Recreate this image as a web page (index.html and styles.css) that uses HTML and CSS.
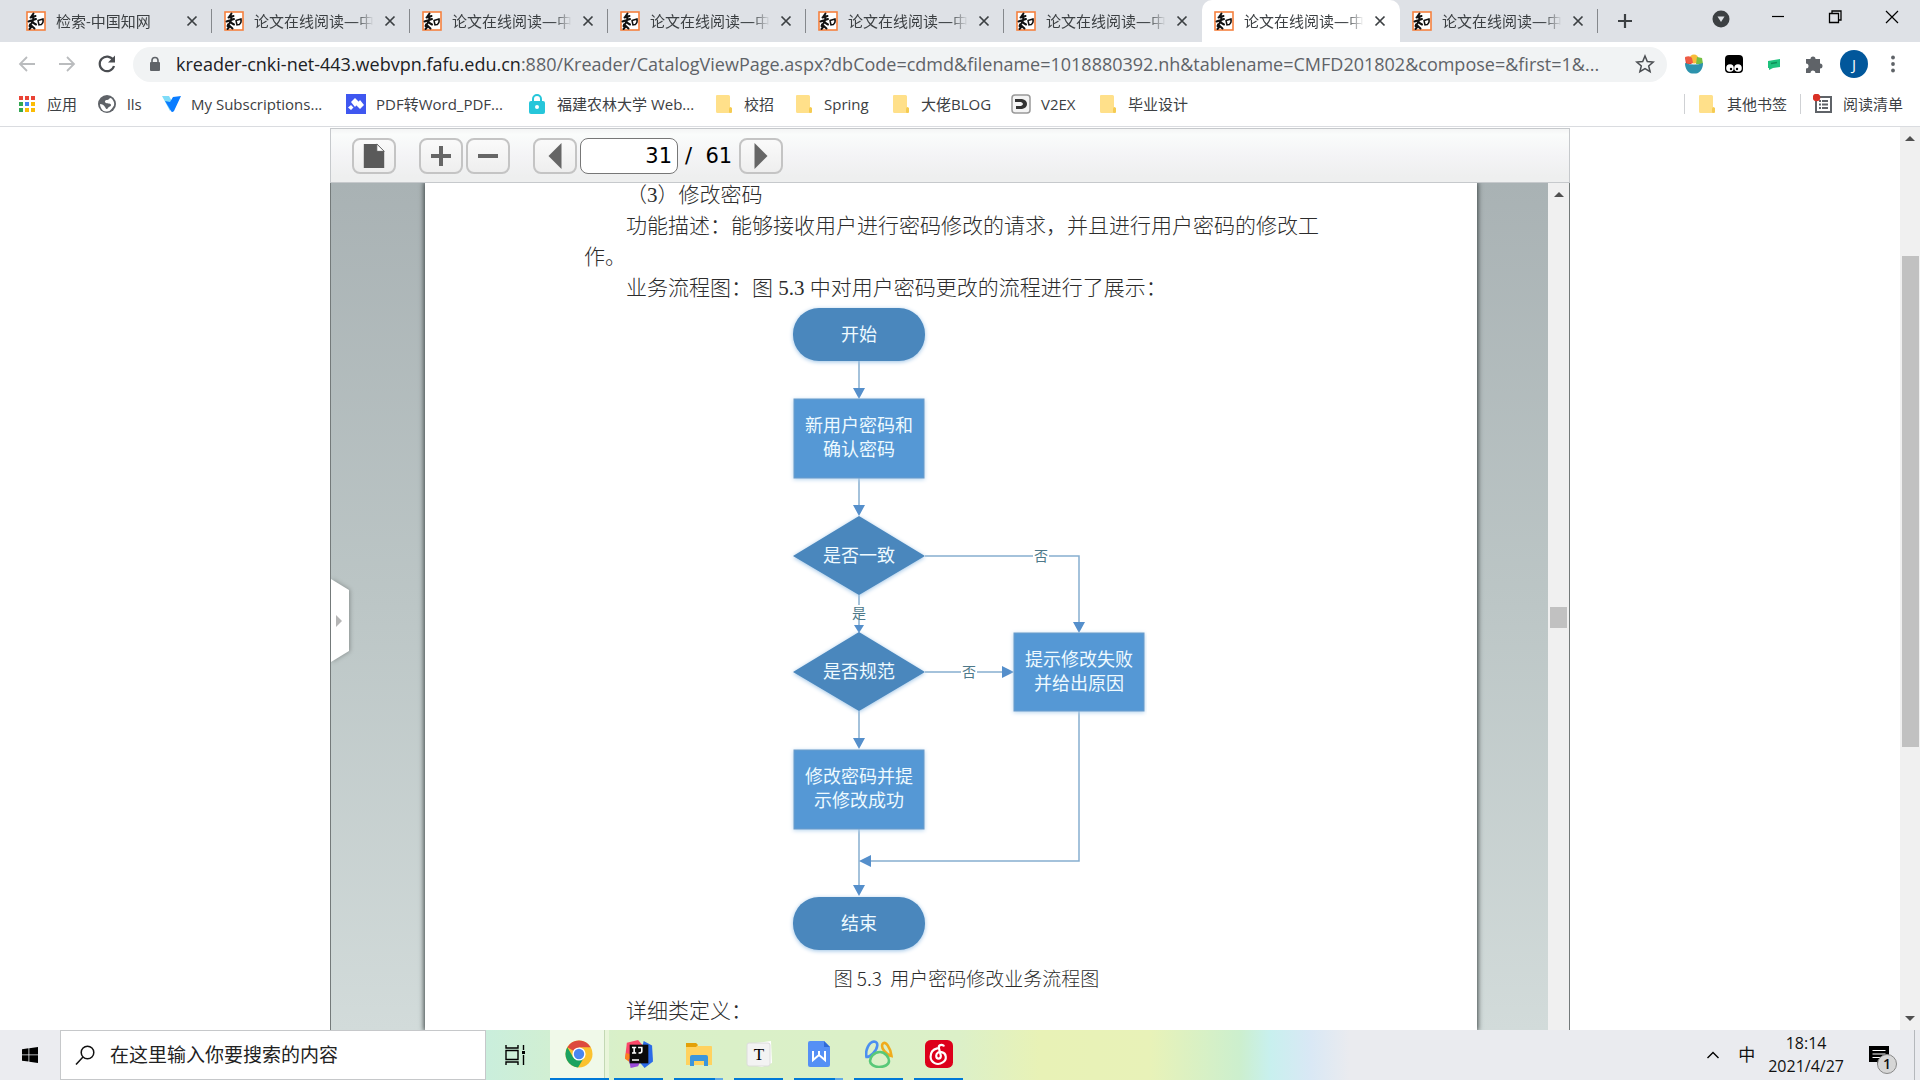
FILE: index.html
```
<!DOCTYPE html>
<html lang="zh-CN">
<head>
<meta charset="utf-8">
<title>论文在线阅读—中国知网</title>
<link rel="stylesheet" href="styles.css">
</head>
<body>
<svg class="defs" aria-hidden="true">
  <symbol id="zhi" viewBox="0 0 20 20">
    <rect x="1" y="1" width="18" height="18" fill="#fff" stroke="#f5813f" stroke-width="1.6"/>
    <path d="M7.500 2.500L5 6M4.500 6.500l5-1.500M2.500 10.500l7.500-2.500M7.500 5.500c0 4-1.500 7-4 9.500M6.500 11c1 1 2.500 2 3.500 2.500M4 13.500l4.500 4M6 15l-2.500 3" fill="none" stroke="#111" stroke-width="2" stroke-linecap="round"/>
    <path d="M12 9.500l1 4.500M12 9.500l5-1.500c.4 2-.3 4.500-1.600 5.500l-2.200.3" fill="none" stroke="#111" stroke-width="1.500" stroke-linecap="round"/>
  </symbol>
  <symbol id="close" viewBox="0 0 12 12"><path d="M1.500 1.500l9 9M10.500 1.500l-9 9" stroke="#3c4043" stroke-width="1.700" fill="none"/></symbol>
  <symbol id="folder" viewBox="0 0 20 20"><path d="M3 1h11.500a1.500 1.500 0 0 1 1.500 1.500V13l2 1v3.500a1.500 1.500 0 0 1-1.500 1.500H3.500A1.500 1.500 0 0 1 2 17.500V2a1 1 0 0 1 1-1z" fill="#ffe08a"/><path d="M15 18.500v-4l1-1.500 2 1v3.500a1.500 1.500 0 0 1-1.500 1.500z" fill="#f5cb52"/></symbol>
</svg>

<header class="browser">
  <div class="tabstrip">
    <div class="tab"><svg class="fav"><use href="#zhi"/></svg><span class="tab-title">检索-中国知网</span><button class="tab-close" aria-label="关闭"><svg><use href="#close"/></svg></button></div>
    <div class="tab"><svg class="fav"><use href="#zhi"/></svg><span class="tab-title">论文在线阅读—中</span><button class="tab-close" aria-label="关闭"><svg><use href="#close"/></svg></button></div>
    <div class="tab"><svg class="fav"><use href="#zhi"/></svg><span class="tab-title">论文在线阅读—中</span><button class="tab-close" aria-label="关闭"><svg><use href="#close"/></svg></button></div>
    <div class="tab"><svg class="fav"><use href="#zhi"/></svg><span class="tab-title">论文在线阅读—中</span><button class="tab-close" aria-label="关闭"><svg><use href="#close"/></svg></button></div>
    <div class="tab"><svg class="fav"><use href="#zhi"/></svg><span class="tab-title">论文在线阅读—中</span><button class="tab-close" aria-label="关闭"><svg><use href="#close"/></svg></button></div>
    <div class="tab before-active"><svg class="fav"><use href="#zhi"/></svg><span class="tab-title">论文在线阅读—中</span><button class="tab-close" aria-label="关闭"><svg><use href="#close"/></svg></button></div>
    <div class="tab active"><svg class="fav"><use href="#zhi"/></svg><span class="tab-title">论文在线阅读—中</span><button class="tab-close" aria-label="关闭"><svg><use href="#close"/></svg></button></div>
    <div class="tab"><svg class="fav"><use href="#zhi"/></svg><span class="tab-title">论文在线阅读—中</span><button class="tab-close" aria-label="关闭"><svg><use href="#close"/></svg></button></div>
    <button class="new-tab" aria-label="新标签页"><svg viewBox="0 0 16 16"><path d="M8 1v14M1 8h14" stroke="#3c4043" stroke-width="2.200"/></svg></button>
    <div class="window-controls">
      <button aria-label="搜索标签页"><svg viewBox="0 0 20 20"><circle cx="10" cy="11" r="8.500" fill="#3c4043"/><path d="M6.500 8.500h7L10 14z" fill="#dee1e6"/></svg></button>
      <button aria-label="最小化"><svg viewBox="0 0 20 20"><path d="M4 8.500h12" stroke="#000" stroke-width="1.200"/></svg></button>
      <button aria-label="还原"><svg viewBox="0 0 20 20"><path d="M4.500 5.500h9v9h-9zM7 5.500v-2.500h9v9h-2.500" fill="none" stroke="#000" stroke-width="1.300"/></svg></button>
      <button aria-label="关闭窗口"><svg viewBox="0 0 20 20"><path d="M4 3l12 12M16 3L4 15" stroke="#000" stroke-width="1.200"/></svg></button>
    </div>
  </div>

  <div class="navbar">
    <button aria-label="后退"><svg viewBox="0 0 20 20"><path d="M18 10H3M10 3l-7 7 7 7" fill="none" stroke="#babcbe" stroke-width="1.800"/></svg></button>
    <button aria-label="前进"><svg viewBox="0 0 20 20"><path d="M2 10h15M10 3l7 7-7 7" fill="none" stroke="#babcbe" stroke-width="1.800"/></svg></button>
    <button aria-label="重新加载"><svg viewBox="0 0 20 20"><path d="M16.200 6A7.300 7.300 0 1 0 17 12" fill="none" stroke="#4a4d51" stroke-width="2.200"/><path d="M18 1.500v7h-7z" fill="#4a4d51"/></svg></button>
    <div class="omnibox">
      <svg class="lock" viewBox="0 0 12 16"><path d="M3 7V4.500a3 3 0 0 1 6 0V7" fill="none" stroke="#5f6368" stroke-width="1.600"/><rect x="1" y="6" width="10" height="9" rx="1" fill="#5f6368"/></svg>
      <span class="url"><b>kreader-cnki-net-443.webvpn.fafu.edu.cn</b>:880/Kreader/CatalogViewPage.aspx?dbCode=cdmd&amp;filename=1018880392.nh&amp;tablename=CMFD201802&amp;compose=&amp;first=1&amp;...</span>
      <button aria-label="收藏"><svg viewBox="0 0 20 20"><path d="M10 2l2.300 5.500 5.900.5-4.500 3.900 1.400 5.800L10 14.600l-5.100 3.100 1.400-5.800L1.800 8l5.900-.5z" fill="none" stroke="#4a4d51" stroke-width="1.500"/></svg></button>
    </div>
    <div class="extensions">
      <button aria-label="扩展一"><svg viewBox="0 0 20 20"><path d="M1 3l7 7H2z" fill="#d8342c"/><circle cx="10" cy="5" r="4.500" fill="#f8bd3a"/><path d="M13 3l5 1 1 6h-7z" fill="#76c043"/><path d="M1 3q5-2 7 1l1 5-6 1z" fill="#ee5b44"/><path d="M1 9q9 3 18 0c0 6-3 10-7 10.500H8C4 19 1 15 1 9z" fill="#2d93ad"/></svg></button>
      <button aria-label="扩展二"><svg viewBox="0 0 20 20"><rect x="1" y="1" width="18" height="18" rx="4" fill="#000"/><circle cx="6" cy="14" r="3.800" fill="#fff"/><circle cx="14" cy="14" r="3.800" fill="#fff"/><circle cx="7" cy="15" r="1.200"/><circle cx="13" cy="15" r="1.200"/></svg></button>
      <button aria-label="扩展三"><svg viewBox="0 0 20 20"><path d="M4 7l12-2v8l-7 1-4 2v-2H4z" fill="#1ec27d"/><path d="M7 9.500l6-1" stroke="#0c8f58" stroke-width="1.500"/></svg></button>
      <button aria-label="扩展程序"><svg viewBox="0 0 20 20"><path d="M2 5h4.500a2.500 2.500 0 1 1 5 0H16v4.500a2.500 2.500 0 1 1 0 5V19h-4.500a2.500 2.500 0 0 0-5 0H2v-4.500a2.500 2.500 0 0 0 0-5z" fill="#5f6368"/></svg></button>
      <button class="avatar" aria-label="用户">J</button>
      <button aria-label="菜单"><svg viewBox="0 0 20 20" fill="#5f6368"><circle cx="10" cy="3.500" r="1.900"/><circle cx="10" cy="10" r="1.900"/><circle cx="10" cy="16.500" r="1.900"/></svg></button>
    </div>
  </div>

  <nav class="bookmarks">
    <a href="#"><svg viewBox="0 0 20 20"><path d="M2 2h4v4H2zM8 2h4v4H8zM14 2h4v4h-4z" fill="#ea4335"/><path d="M2 8h4v4H2zM2 14h4v4H2zM8 14h4v4H8z" fill="#34a853"/><path d="M8 8h4v4H8z" fill="#4285f4"/><path d="M14 8h4v4h-4zM14 14h4v4h-4zM8 14h4v4H8z" fill="#fbbc05"/></svg>应用</a>
    <a href="#"><svg viewBox="0 0 20 20"><circle cx="10" cy="10" r="9" fill="#5f6368"/><path d="M14 4c-2 0-2 2-4 2S7 8 9 9s5 0 5 2-2 1-3 3-2 1-3-1-3-3-5-3q0 2 1 4 2 4 6 3.500 3 0 5-3l2-3q1-4-3-7.500z" fill="#fff"/></svg>lls</a>
    <a href="#"><svg viewBox="0 0 20 20"><path d="M1 2h7l4 7-3 8z" fill="#7fdcf8"/><path d="M4 7l5 1 3-5 8-1-7 15q-2 2-3 0z" fill="#0a7cff"/></svg>My Subscriptions...</a>
    <a href="#"><svg viewBox="0 0 20 20"><rect width="20" height="20" fill="#3f57f0"/><path d="M9 4l4 4-4 5-4-5zM14 6l4 5-4 4-4-4zM5 11l2.500 2.500L5 16l-3-2.500z" fill="#fff"/></svg>PDF转Word_PDF...</a>
    <a href="#"><svg viewBox="0 0 20 20"><path d="M6 8V5a4 4 0 0 1 8 0v3" fill="none" stroke="#26c6da" stroke-width="2"/><rect x="2" y="7" width="16" height="13" rx="2" fill="#26c6da"/><circle cx="10" cy="13" r="2" fill="#fff"/></svg>福建农林大学 Web...</a>
    <a href="#"><svg><use href="#folder"/></svg>校招</a>
    <a href="#"><svg><use href="#folder"/></svg>Spring</a>
    <a href="#"><svg><use href="#folder"/></svg>大佬BLOG</a>
    <a href="#"><svg viewBox="0 0 20 20"><rect x="1" y="1" width="18" height="18" rx="3" fill="#f4f4f4" stroke="#999" stroke-width="1.500"/><path d="M4 5h7q5 1 5 5t-5 5H5v-3h5q2-1 2-2t-2-2H4z" fill="#333"/></svg>V2EX</a>
    <a href="#"><svg><use href="#folder"/></svg>毕业设计</a>
    <a href="#" class="side"><svg><use href="#folder"/></svg>其他书签</a>
    <a href="#" class="side"><svg viewBox="0 0 20 20"><rect x="3" y="3" width="15" height="15" fill="none" stroke="#5f6368" stroke-width="2"/><path d="M6 7h2M9 7h6M6 10.500h2M9 10.500h6M6 14h2M9 14h6" stroke="#5f6368" stroke-width="1.800"/><circle cx="3.500" cy="3.500" r="3.800" fill="#d93025"/></svg>阅读清单</a>
  </nav>
</header>

<main class="page">
  <section class="reader">
    <div class="tools">
      <button class="tool" aria-label="单页"><svg viewBox="0 0 24 28"><path d="M1 1h14l8 8v18H1z" fill="#5a5a5a"/><path d="M15 1v8h8z" fill="#fff" stroke="#5a5a5a"/></svg></button>
      <button class="tool group" aria-label="放大"><svg viewBox="0 0 24 24"><path d="M12 2v20M2 12h20" stroke="#666" stroke-width="4"/></svg></button>
      <button class="tool" aria-label="缩小"><svg viewBox="0 0 24 24"><path d="M2 12h20" stroke="#666" stroke-width="4"/></svg></button>
      <button class="tool group" aria-label="上一页"><svg viewBox="0 0 24 28"><path d="M19 0v28L5 14z" fill="#666"/></svg></button>
      <input class="page-no" aria-label="页码" value="31">
      <span class="total">/&nbsp; 61</span>
      <button class="tool" aria-label="下一页"><svg viewBox="0 0 24 28"><path d="M5 0v28l14-14z" fill="#666"/></svg></button>
    </div>
    <div class="viewer">
      <button class="drawer" aria-label="展开目录"><svg viewBox="0 0 20 84"><path d="M0 0l18 11v61L0 83z" fill="#fff"/><path d="M5 36l6 6-6 6z" fill="#b5b5b5"/></svg></button>
      <article class="paper">
        <p>（3）修改密码</p>
        <p>功能描述：能够接收用户进行密码修改的请求，并且进行用户密码的修改工作。</p>
        <p>业务流程图：图 5.3 中对用户密码更改的流程进行了展示：</p>
        <figure>
          <svg class="flow" viewBox="0 0 360 658" role="img" aria-label="用户密码修改业务流程图">
            <g class="edges">
              <path d="M72 57v30M72 174v30M72 291v33M72 407v31M72 525v63M138 252h154v66M138 368h82M292 407v150H82" class="wire"/>
              <path d="M66 84h12l-6 11zM66 201h12l-6 11zM67 321h10l-5 8zM66 434h12l-6 11zM66 581h12l-6 11zM286 318h12l-6 11zM215 362v12l12-6zM84 551v12l-12-6z" class="head"/>
            </g>
            <g class="gaps"><rect x="246" y="245" width="16" height="14"/><rect x="174" y="361" width="16" height="14"/><rect x="65" y="301" width="14" height="15"/></g>
            <g class="round"><rect x="6" y="4" width="132" height="53" rx="26"/><rect x="6" y="593" width="132" height="53" rx="26"/><path d="M72 212l66 40-66 39-66-39zM72 328l66 40-66 39-66-39z"/></g>
            <g class="box"><rect x="7" y="95" width="130" height="79"/><rect x="7" y="446" width="130" height="79"/><rect x="227" y="329" width="130" height="78"/></g>
            <g class="node">
              <text x="72" y="37">开始</text>
              <text x="72" y="128">新用户密码和</text><text x="72" y="152">确认密码</text>
              <text x="72" y="258">是否一致</text><text x="72" y="374">是否规范</text>
              <text x="292" y="362">提示修改失败</text><text x="292" y="386">并给出原因</text>
              <text x="72" y="479">修改密码并提</text><text x="72" y="503">示修改成功</text>
              <text x="72" y="626">结束</text>
            </g>
            <g class="branch"><text x="254" y="257">否</text><text x="182" y="373">否</text><text x="72" y="314">是</text></g>
          </svg>
          <figcaption>图 5.3&nbsp; 用户密码修改业务流程图</figcaption>
        </figure>
        <p>详细类定义：</p>
      </article>
      <div class="scrollbar inner"><i class="up"></i><i class="thumb"></i></div>
    </div>
  </section>
  <div class="scrollbar outer"><i class="up"></i><i class="thumb"></i><i class="down"></i></div>
</main>

<footer class="taskbar">
  <button class="start" aria-label="开始"><svg viewBox="0 0 16 16"><path d="M0 2.200L6.500 1.300v6.200H0zM7.300 1.200L16 0v7.500H7.300zM0 8.300h6.500v6.200L0 13.700zM7.300 8.300H16V16l-8.700-1.300z"/></svg></button>
  <label class="search"><svg viewBox="0 0 20 20"><circle cx="12.500" cy="7.500" r="6.300" fill="none" stroke="#111" stroke-width="1.500"/><path d="M8 12L1 19.500" stroke="#111" stroke-width="1.500"/></svg><input type="text" placeholder="在这里输入你要搜索的内容" aria-label="搜索"></label>
  <div class="apps">
    <button class="task-view" aria-label="任务视图"><svg viewBox="0 0 22 22"><path d="M2 1v3h12V1M2 21v-3h12v3M2 6.500h12v9H2zM19.500 1v5M19.500 11v10" fill="none" stroke="#000" stroke-width="1.400"/><path d="M18 7h3v3h-3z"/></svg></button>
    <button class="app current" aria-label="Chrome"><svg viewBox="0 0 28 28"><circle cx="14" cy="14" r="13.500" fill="#fbc22f"/><path d="M14 14L2.300 7.200A13.500 13.500 0 0 1 25.700 7.200H14z" fill="#dd4b3e"/><path d="M2.300 7.200A13.500 13.500 0 0 0 13 27.500l6.200-10.200L14 14 8 17z" fill="#1ba260"/><circle cx="14" cy="14" r="6.600" fill="#fff"/><circle cx="14" cy="14" r="5.200" fill="#4a86f0"/></svg></button>
    <button class="app" aria-label="IntelliJ IDEA"><svg viewBox="0 0 30 30"><path d="M2 3L14 0l6 7L8 22 0 20z" fill="#fc4769"/><path d="M1 14l7 2v10l-8-6z" fill="#fc801d"/><path d="M20 1l9 5 1 17-9 7-6-7z" fill="#2b6be8"/><path d="M4 20l12 4-2 4-8 2z" fill="#9b4bd8"/><rect x="5" y="5" width="20" height="20" fill="#0a0a0a"/><path d="M7.500 8H12M7.500 14H12M9.800 8v6M14 8h4v4q0 2-3.500 2M7.500 21.500H15" fill="none" stroke="#fff" stroke-width="1.700"/></svg></button>
    <button class="app split" aria-label="文件资源管理器"><svg viewBox="0 0 28 28"><path d="M1 3h10l2 3h13a1 1 0 0 1 1 1v18H1z" fill="#ffd25f"/><path d="M1 3h10l2 2-2 2H1z" fill="#e3a008"/><path d="M5 26V17q0-2 2-2h14q2 0 2 2v9h-4v-5H9v5z" fill="#3c96dc"/></svg></button>
    <button class="app" aria-label="Typora"><svg viewBox="0 0 28 28"><path d="M2 4l24-3 1 22-10 4-15-3z" fill="#fff"/><rect x="2" y="3" width="23" height="23" rx="2" fill="#f3f3f3" stroke="#dcdcdc"/><text x="14" y="20" class="typora">T</text></svg></button>
    <button class="app split" aria-label="WPS"><svg viewBox="0 0 28 28"><path d="M5 1h14l6 6v18a2 2 0 0 1-2 2H5a2 2 0 0 1-2-2V3a2 2 0 0 1 2-2z" fill="#5590f5"/><path d="M19 1v6h6z" fill="#2f6ad8"/><path d="M8 11v9l6-5 6 5v-9M14 15v-4" fill="none" stroke="#fff" stroke-width="2"/></svg></button>
    <button class="app" aria-label="Navicat"><svg viewBox="0 0 28 28"><g fill="none" stroke-width="2.600"><path d="M1.500 17C0 10 4 2 9 1.500c5 0 4 7-1 12-2 2-4 3.500-6.500 3.500z" stroke="#4b8ff0"/><path d="M17.500 4c3-4 8 4 9 12-5-1-11-8-9-12z" stroke="#f0ac1c"/><path d="M15 12c-6 0-10 5-10 9 0 3 4 6 9 6s10-2 10-6-4-9-9-9z" stroke="#58c878"/></g></svg></button>
    <button class="app" aria-label="网易云音乐"><svg viewBox="0 0 30 30"><rect width="30" height="30" rx="6" fill="#dd001b"/><path d="M20 6c-3-2-6 0-5 3l2 8c0 4-5 4-5 0 0-3 3-5 6-4 5 1 6 8 1 11-6 4-13 0-13-6 0-5 3-8 7-9" fill="none" stroke="#fff" stroke-width="2.300" stroke-linecap="round"/></svg></button>
  </div>
  <div class="tray">
    <button aria-label="显示隐藏的图标"><svg class="chevron" viewBox="0 0 14 14"><path d="M1.500 10L7 4.500 12.500 10" fill="none" stroke="#000" stroke-width="1.400"/></svg></button>
    <span class="ime">中</span>
    <time class="clock">18:14<br>2021/4/27</time>
    <button class="notice" aria-label="通知"><svg viewBox="0 0 22 20"><path d="M1 1h20v16h-8l-4 3v-3H1z"/><path d="M4.500 5.500h13M4.500 9h13M4.500 12.500h8" stroke="#fff" stroke-width="1.200"/></svg><span class="count">1</span></button>
  </div>
</footer>
</body>
</html>
```
FILE: styles.css
```
* { box-sizing: border-box; }

body {
  margin: 0;
  height: 100vh;
  display: flex;
  flex-direction: column;
  background: #fff;
  color: #3c4043;
  font: 15px/20px "Open Sans", "Noto Sans CJK SC", sans-serif;
}

button {
  border: 0;
  padding: 0;
  background: none;
  font: inherit;
  color: inherit;
  display: flex;
  align-items: center;
  justify-content: center;
  flex: none;
}

svg { display: block; flex: none; }
.defs { width: 0; height: 0; position: absolute; }

/* Tab strip */
.tabstrip {
  display: flex;
  height: 42px;
  padding-left: 14px;
  background: #dee1e6;
}

.tab {
  display: flex;
  align-items: center;
  flex: 0 1 198px;
  min-width: 0;
  padding: 0 14px 0 12px;
  background: linear-gradient(#85888c, #85888c) no-repeat right 9px / 1px 24px;
}

.tab.before-active { background: none; }

.tab.active {
  background: #fff;
  border-radius: 10px 10px 0 0;
}

.fav { width: 20px; height: 20px; }

.tab-title {
  flex: 1;
  margin: 0 10px;
  overflow: hidden;
  white-space: nowrap;
  -webkit-mask-image: linear-gradient(90deg, #000 85%, transparent);
  mask-image: linear-gradient(90deg, #000 85%, transparent);
}

.tab-close svg { width: 12px; height: 12px; }
.new-tab { width: 54px; }
.new-tab svg { width: 16px; height: 16px; }

.window-controls { display: flex; margin-left: auto; }
.window-controls button { width: 57px; height: 36px; }
.window-controls svg { width: 20px; height: 20px; }

/* Address bar */
.navbar {
  display: flex;
  align-items: center;
  height: 44px;
  padding: 0 24px 0 7px;
}

.navbar > button { width: 40px; height: 36px; }
.navbar svg { width: 20px; height: 20px; }

.omnibox {
  display: flex;
  align-items: center;
  flex: 1;
  min-width: 0;
  height: 35px;
  margin-left: 6px;
  padding: 0 12px 0 16px;
  border-radius: 18px;
  background: #f1f3f4;
}

.omnibox .lock { width: 12px; height: 16px; margin-right: 15px; }

.url {
  flex: 1;
  overflow: hidden;
  white-space: nowrap;
  font-size: 18px;
  line-height: 24px;
  color: #5f6368;
}

.url b { font-weight: 400; color: #202124; }

.extensions { display: flex; align-items: center; margin-left: 7px; }
.extensions button { width: 40px; height: 36px; }

.extensions .avatar {
  width: 28px;
  height: 28px;
  margin: 0 6px;
  border-radius: 50%;
  background: #01579b;
  color: #fff;
}

.extensions button:last-child { width: 38px; margin-right: -16px; }

/* Bookmarks */
.bookmarks {
  display: grid;
  grid-template-columns: 80px 64px 185px 181px 187px 80px 97px 120px 87px 1fr 116px 104px;
  align-items: center;
  height: 41px;
  padding: 0 16px 5px 17px;
  border-bottom: 1px solid #dadce0;
}

.bookmarks a {
  display: flex;
  align-items: center;
  gap: 10px;
  color: inherit;
  text-decoration: none;
  white-space: nowrap;
}

.bookmarks svg { width: 20px; height: 20px; }
.bookmarks .side { border-left: 1px solid #cfd1d4; padding-left: 12px; }

/* Page */
.page { display: flex; flex: 1; min-height: 0; }

.reader {
  display: flex;
  flex-direction: column;
  flex: 0 1 1240px;
  min-width: 0;
  margin: 1px auto 0;
}

.tools {
  display: flex;
  align-items: center;
  gap: 3px;
  height: 55px;
  flex: none;
  padding-left: 21px;
  border: 1px solid #c6c9cc;
  background: linear-gradient(#f4f5f5, #fafcfb 10%, #f4f4f6 50%, #eeefef 90%);
}

.tool {
  width: 44px;
  height: 36px;
  border: 2px solid #c4c4c4;
  border-radius: 8px;
  background: linear-gradient(#fafafa, #eee);
}

.tool svg { width: 24px; height: 26px; }
.tool.group { margin-left: 20px; }

.page-no {
  width: 98px;
  height: 36px;
  padding: 0 5px;
  border: 1px solid #777;
  border-radius: 8px;
  text-align: right;
  color: #000;
  font: 21px/24px "DejaVu Sans", sans-serif;
}

.total { margin: 0 4px; color: #000; font: 21px/24px "DejaVu Sans", sans-serif; }

.viewer {
  position: relative;
  display: flex;
  flex: 1;
  min-height: 0;
  overflow: hidden;
  border: solid #747a7a;
  border-width: 0 1px;
  background: linear-gradient(#a9b2b4, #bcc6c6 50%, #d2dbda);
}

.drawer {
  position: absolute;
  left: 0;
  top: calc(50% - 28px);
  filter: drop-shadow(1px 0 2px #89908f);
}

.drawer svg { width: 20px; height: 84px; }

.paper {
  flex: 1;
  margin: 0 71px 0 94px;
  padding: 0 150px 0 159px;
  background: #fff;
  box-shadow: 0 0 5px 1px #3c4444;
  color: #2c2c2c;
  font: 21px/31px "Liberation Serif", "Noto Sans CJK SC", serif;
}

.paper p { margin: 0; text-indent: 2em; font-weight: 300; }
.paper p:first-child { margin-top: -3px; }

.paper figure { margin: 0 0 3px; padding-left: 22px; text-align: center; }
.flow { width: 360px; height: 658px; margin: 0 auto; }
.paper figcaption { font: 19px/31px "Noto Sans CJK SC", sans-serif; font-weight: 300; }

.wire { fill: none; stroke: #86aed0; stroke-width: 1.500px; }
.head { fill: #558fcb; }
.gaps { fill: #fff; }
.round { fill: #4a87bd; filter: drop-shadow(0 1px 2px #9cc3e6); }
.box { fill: #5598d5; stroke: #6c9dcb; filter: drop-shadow(0 1px 2px #b4d3ee); }
.flow text { font-family: "Noto Sans CJK SC", sans-serif; text-anchor: middle; }
.node { fill: #eefaff; font-size: 18px; }
.branch { fill: #4d7889; font-size: 14px; }

.scrollbar {
  display: flex;
  flex-direction: column;
  align-items: center;
  flex: none;
  background: #f0f0f0;
}

.inner { width: 21px; padding-top: 9px; }
.outer { width: 20px; padding: 9px 0; }
.thumb { width: 17px; background: #c1c1c1; }
.inner .thumb { height: 21px; margin-top: 410px; }
.outer .thumb { height: 491px; margin-top: 115px; }

.up, .down { border: 5px solid transparent; border-top-width: 0; border-bottom-color: #505050; }
.down { margin-top: auto; transform: rotate(180deg); }

/* Taskbar */
.taskbar {
  display: flex;
  flex: none;
  height: 50px;
  color: #111;
  background: linear-gradient(90deg, #ebecf0 0, #ebecf0 60px, #c9eedd 480px, #d9f0c8 620px, #dcf0c8 960px, #e8f2b6 1040px, #e8f2b8 1150px, #ccefce 1240px, #c8f0ee 1270px, #d9e8f5 1310px, #eaebef 1350px);
}

.start { width: 60px; }
.start svg { width: 16px; height: 16px; }

.search {
  display: flex;
  align-items: center;
  gap: 15px;
  flex: 0 1 426px;
  min-width: 0;
  padding-left: 14px;
  border: 1px solid #c6c8ca;
  background: #fff;
}

.search svg { width: 20px; height: 20px; }

.search input {
  flex: 1;
  min-width: 0;
  border: 0;
  padding: 0;
  font: 19px/24px "Open Sans", "Noto Sans CJK SC", sans-serif;
}

.search input::placeholder { color: #222; opacity: 1; }

.apps { display: flex; gap: 11px; }
.task-view { width: 58px; }
.task-view svg { width: 22px; height: 22px; }

.app {
  width: 49px;
  border-bottom: 2px solid #0078d7;
}

.app svg { width: 28px; height: 28px; }
.app.split { border-image: linear-gradient(90deg, #0078d7 80%, #62aae6 80%) 2; border-width: 0 0 2px; border-style: solid; }
.app.current { width: 59px; margin: 0 -6px 0 -5px; padding-right: 2px; background: linear-gradient(90deg, #f0f9e9 54px, #c3d8b4 54px, #c3d8b4 55px, #e9f5da 55px); }
.typora { font: 17px "Liberation Serif", serif; text-anchor: middle; }

.tray { display: flex; align-items: center; margin-left: auto; padding-right: 5px; }
.chevron { width: 14px; height: 14px; }
.ime { margin: 0 13px 0 18px; font-size: 17px; }
.clock { color: #111; font-size: 16px; line-height: 23px; text-align: center; }

.notice { position: relative; width: 58px; height: 50px; margin-left: 13px; border-right: 1px solid #b5b8bc; }
.notice svg { width: 22px; height: 20px; margin-right: 14px; }

.count {
  position: absolute;
  right: 17px;
  bottom: 6px;
  width: 20px;
  height: 20px;
  border: 1px solid #888;
  border-radius: 50%;
  background: #d6d6d6;
  font-size: 14px;
  line-height: 18px;
  font-weight: 600;
}
```
